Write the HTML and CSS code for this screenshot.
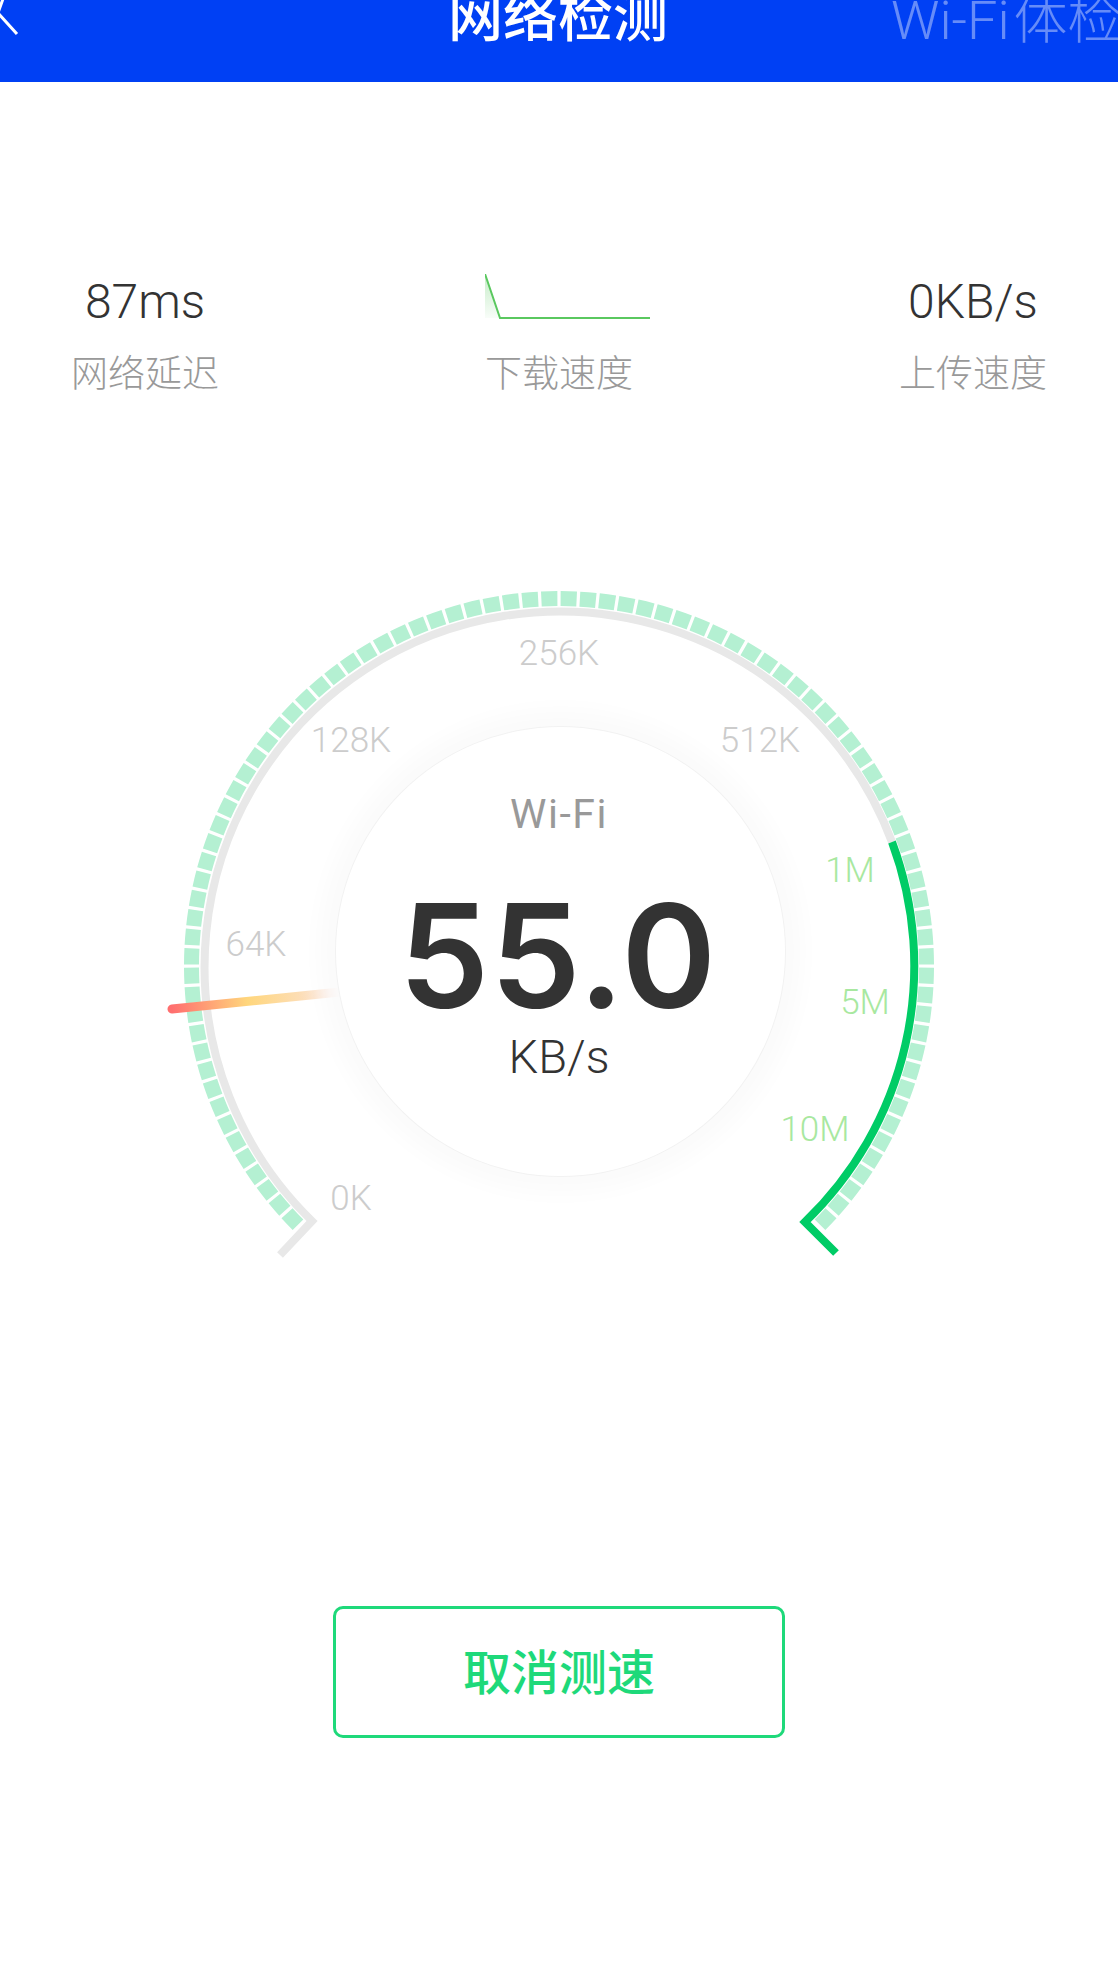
FILE: index.html
```html
<!DOCTYPE html>
<html lang="zh-CN">
<head>
  <meta charset="UTF-8">
  <meta name="viewport" content="width=device-width, initial-scale=1.0">
  <title>网络检测</title>
  <link rel="stylesheet" href="styles.css">
</head>
<body>

  <header class="topbar">
    <svg class="back-icon" width="24" height="82" viewBox="0 0 24 82">
      <polyline points="4,-4 -2,13 17,34" />
    </svg>
    <h1 class="topbar-title">网络检测</h1>
    <span class="topbar-tab">Wi-Fi<span class="topbar-tab-cjk">体检</span></span>
  </header>

  <section class="stats">
    <div class="stat">
      <div class="stat-value">87ms</div>
      <div class="stat-label">网络延迟</div>
    </div>
    <div class="stat">
      <div class="stat-value">
        <svg class="stat-chart" width="165" height="46" viewBox="0 0 165 46">
          <defs>
            <linearGradient id="chartFill" x1="0" y1="0" x2="0" y2="1">
              <stop offset="0" stop-color="#5ac85f" stop-opacity="0.35" />
              <stop offset="1" stop-color="#5ac85f" stop-opacity="0.04" />
            </linearGradient>
          </defs>
          <polygon points="0,0 15,44 0,44" fill="url(#chartFill)" />
          <polyline points="0,0 15,44 165,44" fill="none" stroke="#5ac85f" stroke-width="2" />
        </svg>
      </div>
      <div class="stat-label">下载速度</div>
    </div>
    <div class="stat">
      <div class="stat-value">0KB/s</div>
      <div class="stat-label">上传速度</div>
    </div>
  </section>

  <section class="gauge">
    <svg class="gauge-dial" width="1118" height="720" viewBox="0 560 1118 720">
      <defs>
        <linearGradient id="needleFill" gradientUnits="userSpaceOnUse" x1="172" y1="1009" x2="339" y2="992">
          <stop offset="0" stop-color="#ff6f6f" />
          <stop offset="0.45" stop-color="#ffd67c" />
          <stop offset="1" stop-color="#fbe3df" />
        </linearGradient>
      </defs>

      <!-- ticks, one every 3 degrees -->
      <path class="dial-ticks" pathLength="270" stroke-dasharray="2.5 0.5" stroke-dashoffset="-0.25"
        d="M299.1 1225.9 A367.5 367.5 0 1 1 818.9 1225.9" />
      <path class="dial-track" d="M280 1255 L312 1221 A355 355 0 1 1 892 842" />
      <path class="dial-range" d="M892 842 A355 355 0 0 1 805 1222 L836 1253" />

      <line class="dial-needle" x1="172" y1="1009" x2="345" y2="991.5" stroke="url(#needleFill)" />

      <text class="dial-label" x="351" y="1210">0K</text>
      <text class="dial-label" x="256" y="956">64K</text>
      <text class="dial-label" x="351" y="752">128K</text>
      <text class="dial-label" x="559" y="665">256K</text>
      <text class="dial-label" x="760" y="752">512K</text>
      <text class="dial-label dial-label-on" x="850" y="882">1M</text>
      <text class="dial-label dial-label-on" x="865" y="1014">5M</text>
      <text class="dial-label dial-label-on" x="815" y="1141">10M</text>
    </svg>

    <div class="gauge-center">
      <div class="gauge-net">Wi-Fi</div>
      <div class="gauge-speed">55.0</div>
      <div class="gauge-unit">KB/s</div>
    </div>
  </section>

  <div class="actions">
    <button type="button" class="cancel-btn">取消测速</button>
  </div>

</body>
</html>
```

FILE: styles.css
```css
* {
  box-sizing: border-box;
}

html,
body {
  margin: 0;
  background-color: #fff;
}

body {
  width: 1118px;
  height: 1988px;
  overflow: hidden;
  font-family: "Roboto", "Noto Sans CJK SC", sans-serif;
  font-weight: 300;
}

.topbar {
  display: flex;
  align-items: flex-start;
  position: relative;
  height: 82px;
  background-color: #0040f4;
  overflow: hidden;
  color: #fff;
}

.back-icon {
  flex: none;
  fill: none;
  stroke: #fff;
  stroke-width: 3;
}

.topbar-title {
  margin: -20px 0 0 424px;
  font-size: 55px;
  font-weight: 500;
  line-height: 64px;
  font-family: "Noto Sans CJK SC", sans-serif;
  white-space: nowrap;
}

.topbar-tab {
  margin: -16px 0 0 223px;
  font-size: 54px;
  line-height: 64px;
  color: rgba(255, 255, 255, 0.4);
  white-space: nowrap;
}

.topbar-tab-cjk {
  margin-left: 4px;
  font-family: "Noto Sans CJK SC", sans-serif;
}

.stats {
  display: grid;
  grid-template-columns: repeat(3, 290px);
  justify-content: space-between;
  margin-top: 192px;
}

.stat {
  text-align: center;
}

.stat-value {
  height: 56px;
  font-size: 48px;
  line-height: 56px;
  color: #333;
}

.stat-chart {
  display: block;
  margin: 0 auto;
  transform: translateX(8px);
}

.stat-label {
  margin-top: 17px;
  font-size: 37px;
  line-height: 48px;
  color: #999;
  font-family: "Noto Sans CJK SC", sans-serif;
  font-weight: 300;
}

.gauge {
  position: relative;
  height: 720px;
  margin-top: 165px;
}

.gauge-dial {
  display: block;
}

.dial-ticks {
  fill: none;
  stroke: #b4f0d2;
  stroke-width: 15;
}

.dial-track {
  fill: none;
  stroke: #e8e8e8;
  stroke-width: 8;
}

.dial-range {
  fill: none;
  stroke: #00cc66;
  stroke-width: 8;
}

.dial-needle {
  stroke-width: 9;
  stroke-linecap: round;
}

.dial-label {
  font-size: 35px;
  fill: #ccc;
  text-anchor: middle;
}

.dial-label-on {
  fill: #a8e8a0;
}

.gauge-center {
  position: absolute;
  left: 336px;
  top: 167px;
  width: 449px;
  height: 449px;
  padding: 63px 3px 0 0;
  border-radius: 50%;
  background-color: #fff;
  box-shadow: 0 0 0 1px #f2f2f2, 0 0 22px 18px #fbfbfb;
  text-align: center;
}

.gauge-net {
  font-size: 41px;
  font-weight: 400;
  line-height: 48px;
  letter-spacing: 1.5px;
  color: #999;
}

.gauge-speed {
  margin-top: 41px;
  padding-right: 2px;
  font-family: "Inter", sans-serif;
  font-weight: 600;
  font-size: 144px;
  line-height: 154px;
  letter-spacing: 1px;
  color: #333;
}

.gauge-unit {
  margin-top: -4px;
  font-size: 47px;
  line-height: 56px;
  color: #333;
}

.actions {
  display: flex;
  justify-content: center;
  margin-top: 326px;
}

.cancel-btn {
  width: 452px;
  height: 132px;
  padding: 0 0 6px;
  border: 3px solid #1ed97a;
  border-radius: 10px;
  background-color: #fff;
  color: #1ed97a;
  font-family: "Noto Sans CJK SC", sans-serif;
  font-size: 48px;
  font-weight: 500;
}
```
